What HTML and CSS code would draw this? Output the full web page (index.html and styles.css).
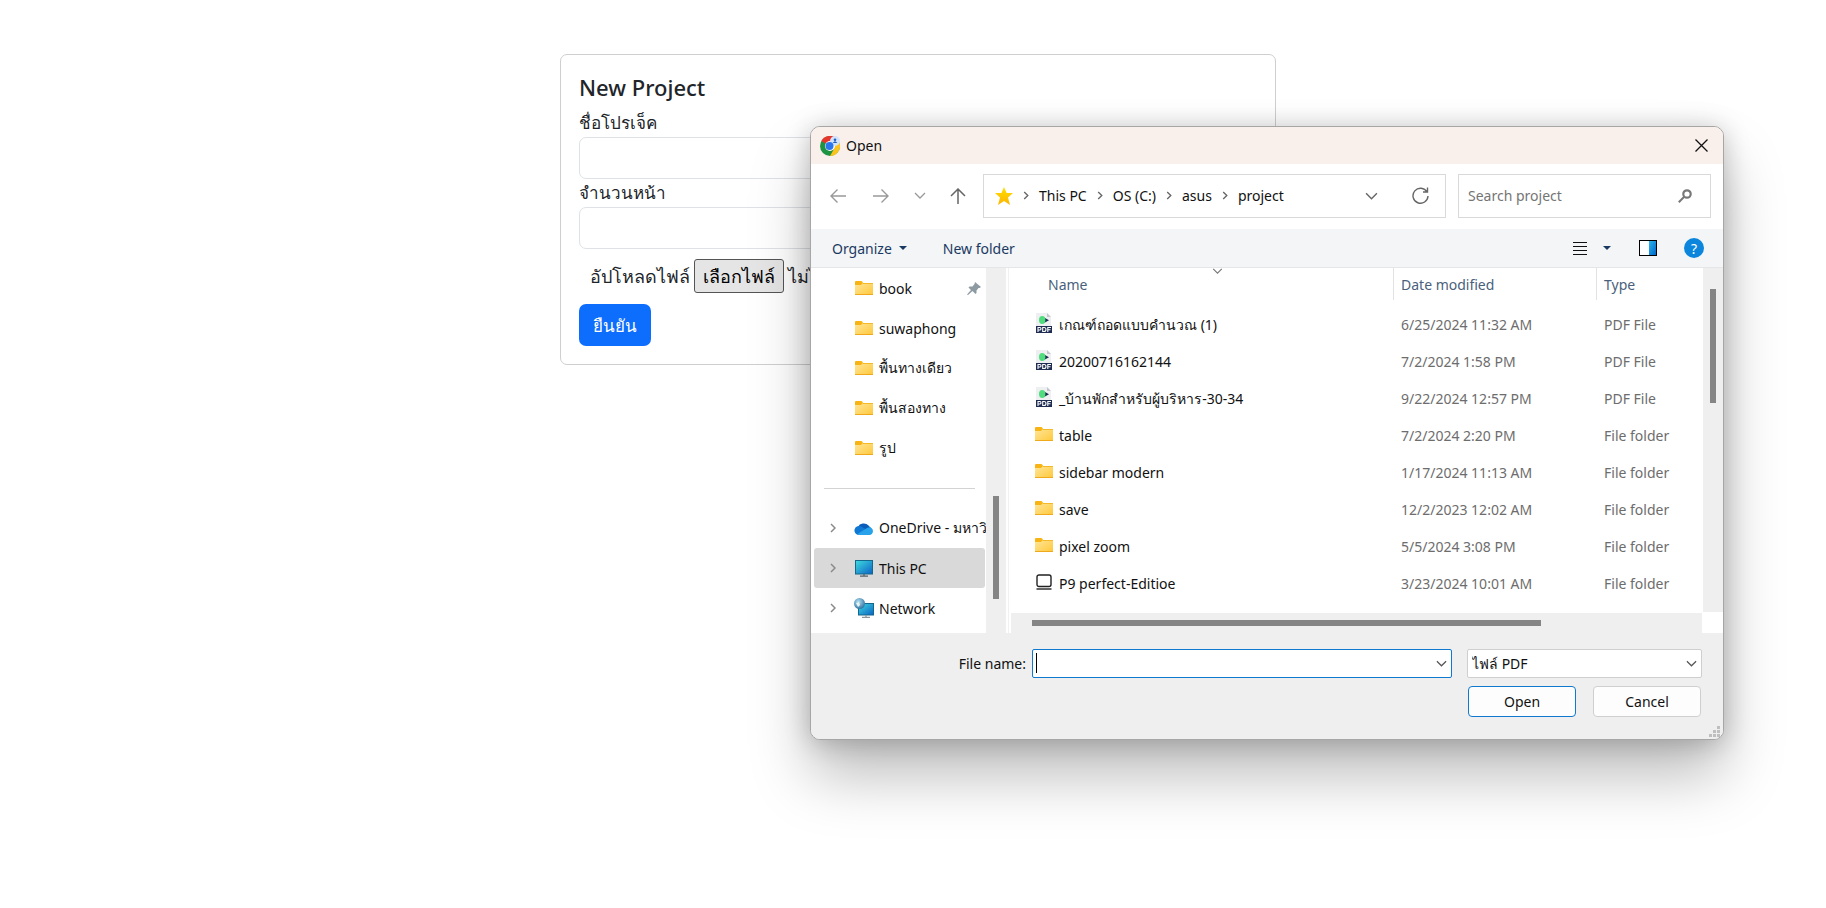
FILE: index.html
```html
<!DOCTYPE html>
<html lang="th">
<head>
<meta charset="utf-8">
<title>New Project</title>
<link rel="stylesheet" href="styles.css">
</head>
<body>
<svg class="defs" aria-hidden="true">
  <defs>
    <linearGradient id="gFolder" x1="0" y1="0" x2="1" y2="1"><stop offset="0" stop-color="#ffe69a"/><stop offset="1" stop-color="#ffc83a"/></linearGradient>
    <linearGradient id="gStar" x1="0" y1="0" x2="0" y2="1"><stop offset="0" stop-color="#ffe000"/><stop offset="1" stop-color="#fdb400"/></linearGradient>
    <linearGradient id="gScreen" x1="0" y1="0" x2="1" y2="1"><stop offset="0" stop-color="#3fdce0"/><stop offset="1" stop-color="#0b62c4"/></linearGradient>
    <linearGradient id="gPane" x1="0" y1="0" x2="1" y2="1"><stop offset="0" stop-color="#2db4ee"/><stop offset="1" stop-color="#0067c8"/></linearGradient>
    <radialGradient id="gGlobe" cx=".4" cy=".35" r=".7"><stop offset="0" stop-color="#b5e0f2"/><stop offset="1" stop-color="#2a6f9e"/></radialGradient>
    <symbol id="folder" viewBox="0 0 18 14"><path d="M0 1Q0 0 1 0H6Q7 0 7.500 1L8 2V5H0Z" fill="#f8b414"/><path d="M0 4H6L8 2H18V14H0Z" fill="url(#gFolder)"/><path d="M8 2.500H18" stroke="#f4b92a"/><path d="M0 13.500H18" stroke="#eeaa1c"/></symbol>
    <symbol id="pdf" viewBox="0 0 16 20"><path d="M0 0H11L15 4V14H0Z" fill="#eeeff1"/><path d="M11 0L15 4H11Z" fill="#c3c6ca"/><path d="M8 4.500L13 7.200L8 10Z" fill="#1c2a50"/><ellipse cx="6.200" cy="7" rx="3.200" ry="4" fill="#4fdc7c"/><rect y="13" width="16" height="7" fill="#1e2c52"/><path d="M2 19V14.500H4Q5 14.500 5 15.700T4 17H2M6.700 14.500V18.500H8Q10 18.500 10 16.500T8 14.500ZM11.800 19V14.500H15M11.800 16.800H14.500" fill="none" stroke="#fff" stroke-width="1.100"/></symbol>
    <symbol id="laptop" viewBox="0 0 16 16"><rect x="1" y="1" width="14" height="11.500" rx="2" fill="none" stroke="#222" stroke-width="1.400"/><path d="M.5 15H15.500" stroke="#222" stroke-width="1.400"/></symbol>
    <symbol id="right" viewBox="0 0 6 10"><path d="M1 1L5 5L1 9" fill="none" stroke="currentColor" stroke-width="1.500"/></symbol>
    <symbol id="down" viewBox="0 0 12 7"><path d="M1 1L6 6L11 1" fill="none" stroke="currentColor" stroke-width="1.300"/></symbol>
    <symbol id="caret" viewBox="0 0 8 4"><path d="M0 0H8L4 4Z" fill="#1b3a63"/></symbol>
  </defs>
</svg>

<main class="page">
  <form class="card">
    <h1 class="card-title">New Project</h1>
    <label class="field-label" for="pname">ชื่อโปรเจ็ค</label>
    <input class="field" id="pname" type="text">
    <label class="field-label" for="pages">จำนวนหน้า</label>
    <input class="field" id="pages" type="text">
    <div class="upload">
      <label for="pick">อัปโหลดไฟล์</label>
      <button class="pick" id="pick" type="button">เลือกไฟล์</button>
      <span>ไม่ได้เลือกไฟล์ใด</span>
    </div>
    <button class="submit" type="submit">ยืนยัน</button>
  </form>
</main>

<section class="dialog" role="dialog" aria-label="Open">
  <header class="titlebar">
    <svg width="20" height="20" viewBox="0 0 20 20"><circle cx="10" cy="10" r="10" fill="#1e9443"/><path d="M10 10L1.300 5A10 10 0 0 1 18.700 5Z" fill="#e6352b"/><path d="M10 5H18.700A10 10 0 0 1 10 20L14.300 12.500Z" fill="#fcc31c"/><circle cx="10" cy="10" r="5" fill="#fff"/><circle cx="15" cy="5" r="5" fill="#d3e3fb"/><circle cx="9.500" cy="10" r="4" fill="#2b76ec"/><circle cx="15" cy="3.800" r="1.300" fill="#1f5fc4"/><path d="M12.700 7Q15 3.500 17.300 7Z" fill="#1f5fc4"/></svg>
    <span>Open</span>
    <button class="icon-btn close" aria-label="Close"><svg width="13" height="13" viewBox="0 0 13 13"><path d="M.5.5L12.500 12.500M12.500.5L.5 12.500" stroke="#111" stroke-width="1.300"/></svg></button>
  </header>

  <nav class="navbar">
    <div class="arrows">
      <button class="icon-btn dim back" aria-label="Back"><svg width="16" height="14" viewBox="0 0 16 14" fill="none" stroke="currentColor" stroke-width="1.400"><path d="M16 7H1M7.500.5L1 7L7.500 13.500"/></svg></button>
      <button class="icon-btn dim" aria-label="Forward"><svg width="16" height="14" viewBox="0 0 16 14" fill="none" stroke="currentColor" stroke-width="1.400"><path d="M0 7H15M8.500.5L15 7L8.500 13.500"/></svg></button>
      <button class="icon-btn dim" aria-label="Recent locations"><svg width="12" height="7"><use href="#down"/></svg></button>
      <button class="icon-btn" aria-label="Up"><svg width="16" height="16" viewBox="0 0 16 16" fill="none" stroke="currentColor" stroke-width="1.500"><path d="M8 16V1M1 8L8 1L15 8"/></svg></button>
    </div>
    <div class="address">
      <svg width="18" height="18" viewBox="0 0 18 18"><path d="M9 0L11.600 6H18L13 10.500L15 18L9 14L3 18L5 10.500L0 6H6.400Z" fill="url(#gStar)"/></svg>
      <svg width="6" height="9"><use href="#right"/></svg><a href="#">This PC</a>
      <svg width="6" height="9"><use href="#right"/></svg><a href="#">OS (C:)</a>
      <svg width="6" height="9"><use href="#right"/></svg><a href="#">asus</a>
      <svg width="6" height="9"><use href="#right"/></svg><a href="#">project</a>
      <button class="icon-btn history" aria-label="Previous locations"><svg width="13" height="8"><use href="#down"/></svg></button>
      <button class="icon-btn" aria-label="Refresh"><svg width="17" height="17" viewBox="0 0 17 17" fill="none" stroke="currentColor" stroke-width="1.400"><path d="M15 5A7.500 7.500 0 1 0 16 9M15.500.5V5H11"/></svg></button>
    </div>
    <div class="search">
      <input type="search" placeholder="Search project" aria-label="Search project">
      <svg width="14" height="14" viewBox="0 0 14 14" fill="none" stroke="#777"><circle cx="9" cy="5" r="3.700" stroke-width="2.200"/><path d="M6.200 7.800L.8 13.200" stroke-width="2"/></svg>
    </div>
  </nav>

  <div class="toolbar">
    <button class="tool">Organize <svg width="8" height="4"><use href="#caret"/></svg></button>
    <button class="tool">New folder</button>
    <button class="tool view" aria-label="View"><svg width="14" height="13" viewBox="0 0 14 13"><path d="M0 .5H14M0 4.500H14M0 8.500H14M0 12.500H14" stroke="#111"/></svg></button>
    <button class="tool" aria-label="More views"><svg width="8" height="4"><use href="#caret"/></svg></button>
    <button class="tool pane" aria-label="Preview pane"><svg width="18" height="16" viewBox="0 0 18 16"><rect x=".5" y=".5" width="17" height="15" fill="#fff" stroke="#000"/><rect x="10" y="1" width="7" height="14" fill="url(#gPane)"/></svg></button>
    <button class="tool help" aria-label="Help">?</button>
  </div>

  <div class="content">
    <aside class="tree">
      <ul>
        <li><i></i><svg width="18" height="14"><use href="#folder"/></svg><span>book</span><svg class="pin" width="14" height="13" viewBox="0 0 14 13"><path d="M8 0L14 5L12.500 6L11.500 6L9.500 8.500L9.500 11L8.500 12L5.500 9L1 13L0 12.500L4 8L1.500 5.500L2.500 4.500L5.500 4.500L7.500 2Z" fill="#8e9aa2"/></svg></li>
        <li><i></i><svg width="18" height="14"><use href="#folder"/></svg><span>suwaphong</span></li>
        <li><i></i><svg width="18" height="14"><use href="#folder"/></svg><span>พื้นทางเดียว</span></li>
        <li><i></i><svg width="18" height="14"><use href="#folder"/></svg><span>พื้นสองทาง</span></li>
        <li><i></i><svg width="18" height="14"><use href="#folder"/></svg><span>รูป</span></li>
      </ul>
      <hr>
      <ul>
        <li><i><svg width="6" height="10"><use href="#right"/></svg></i><svg class="wide" width="20" height="13" viewBox="0 0 20 13"><path d="M4 5A6 5 0 0 1 14.500 3.500L17 6L10 9L3 8Z" fill="#0a5cb8"/><path d="M5 13A4.500 4.500 0 1 1 7.500 4.800L15 9L12 13Z" fill="#0f78d4"/><path d="M3 12.200L13 6Q15.500 4.500 17.500 6A4 4 0 0 1 16 13H5Q4 13 3 12.200Z" fill="#28a2ea"/></svg><span>OneDrive - มหาวิทยาลัย</span></li>
        <li class="selected"><i><svg width="6" height="10"><use href="#right"/></svg></i><svg width="18" height="17" viewBox="0 0 18 17"><rect x=".5" y=".5" width="17" height="13.500" fill="url(#gScreen)" stroke="#14688c"/><path d="M9 14V16M5 16.200H13" stroke="#54626c" stroke-width="1.300"/></svg><span>This PC</span></li>
        <li><i><svg width="6" height="10"><use href="#right"/></svg></i><svg class="wide" width="20" height="20" viewBox="0 0 20 20"><rect x="4.500" y="5.500" width="15" height="11.500" fill="url(#gScreen)" stroke="#14688c"/><path d="M12 17V19M8 19.400H16" stroke="#8b979e" stroke-width="1.300"/><circle cx="5.500" cy="5.500" r="5.500" fill="url(#gGlobe)"/><path d="M2 5L5 4L6 7L4 9Z" fill="#e8f4f4"/></svg><span>Network</span></li>
      </ul>
    </aside>
    <div class="vscroll tree-scroll"><b></b></div>
    <div class="list">
      <div class="list-view">
        <table>
          <thead><tr><th class="c-name">Name<svg class="sort" width="11" height="6"><use href="#down"/></svg></th><th class="c-date">Date modified</th><th class="c-type">Type</th></tr></thead>
          <tbody>
            <tr><td><div class="file"><svg width="18" height="20"><use href="#pdf"/></svg>เกณฑ์ถอดแบบคำนวณ (1)</div></td><td>6/25/2024 11:32 AM</td><td>PDF File</td></tr>
            <tr><td><div class="file"><svg width="18" height="20"><use href="#pdf"/></svg>20200716162144</div></td><td>7/2/2024 1:58 PM</td><td>PDF File</td></tr>
            <tr><td><div class="file"><svg width="18" height="20"><use href="#pdf"/></svg>_บ้านพักสำหรับผู้บริหาร-30-34</div></td><td>9/22/2024 12:57 PM</td><td>PDF File</td></tr>
            <tr><td><div class="file"><svg width="18" height="14"><use href="#folder"/></svg>table</div></td><td>7/2/2024 2:20 PM</td><td>File folder</td></tr>
            <tr><td><div class="file"><svg width="18" height="14"><use href="#folder"/></svg>sidebar modern</div></td><td>1/17/2024 11:13 AM</td><td>File folder</td></tr>
            <tr><td><div class="file"><svg width="18" height="14"><use href="#folder"/></svg>save</div></td><td>12/2/2023 12:02 AM</td><td>File folder</td></tr>
            <tr><td><div class="file"><svg width="18" height="14"><use href="#folder"/></svg>pixel zoom</div></td><td>5/5/2024 3:08 PM</td><td>File folder</td></tr>
            <tr><td><div class="file"><svg width="18" height="16"><use href="#laptop"/></svg>P9 perfect-Editioe</div></td><td>3/23/2024 10:01 AM</td><td>File folder</td></tr>
          </tbody>
        </table>
        <div class="hscroll"><b></b></div>
      </div>
      <div class="vscroll list-scroll"><b></b></div>
    </div>
  </div>

  <footer class="footer">
    <label for="fname">File name:</label>
    <div class="combo fname"><input id="fname" type="text"><span class="cursor"></span><svg width="11" height="7"><use href="#down"/></svg></div>
    <div class="combo ftype"><select aria-label="File type"><option>ไฟล์ PDF</option></select><svg width="11" height="7"><use href="#down"/></svg></div>
    <div class="actions"><button class="btn primary">Open</button><button class="btn">Cancel</button></div>
    <svg class="grip" width="12" height="12" viewBox="0 0 12 12" fill="#bfbfbf"><path d="M9 0h3v3H9zM5 4h3v3H5zM9 4h3v3H9zM1 8h3v3H1zM5 8h3v3H5zM9 8h3v3H9z"/></svg>
  </footer>
</section>
</body>
</html>
```
FILE: styles.css
```css
* { box-sizing: border-box; }
body {
  margin: 0;
  background: #fff;
  color: #212529;
  font-family: "Noto Sans", "Open Sans", sans-serif;
  font-size: 14px;
  overflow: hidden;
}
button, input, select { font: inherit; color: inherit; margin: 0; }
svg { display: block; flex: none; }
.defs { position: absolute; width: 0; height: 0; }

/* Project form */
.page { padding: 54px 0 54px 10px; font-size: 17px; }
.card {
  width: 716px;
  max-width: 100%;
  margin: 0 auto;
  display: flex;
  flex-direction: column;
  border: 1px solid #cfcfcf;
  border-radius: 7px;
  padding: 19px 18px 18px;
}
.card-title { margin: 0 0 8px; font-size: 22px; font-weight: 500; line-height: 27px; }
.field-label { line-height: 28px; }
.field { height: 42px; border: 1px solid #dee2e6; border-radius: 7px; padding: 6px 12px; }
.upload { display: flex; align-items: center; gap: 4px; padding: 10px 11px 11px; font-size: 18px; line-height: 27px; white-space: nowrap; }
.pick { height: 34px; padding: 0 8px; border: 1px solid #555; border-radius: 3px; background: #e5e5e5; color: #000; }
.submit { align-self: flex-start; height: 42px; padding: 0 14px; border: 0; border-radius: 7px; background: #0d6efd; color: #fff; }

/* File dialog window */
.dialog {
  position: absolute;
  left: 810px;
  right: 102px;
  top: 126px;
  border: 1px solid #a6a6a6;
  border-radius: 10px;
  background: #fff;
  color: #111;
  box-shadow: 0 36px 60px rgba(0, 0, 0, .26), 0 2px 26px rgba(0, 0, 0, .22);
}
.icon-btn { padding: 0; border: 0; background: none; color: #666; }
.icon-btn.dim { color: #999; }
.titlebar {
  display: flex;
  align-items: center;
  gap: 6px;
  height: 37px;
  padding: 0 15px 0 9px;
  border-radius: 9px 9px 0 0;
  background: #f9f0eb;
}
.close { margin-left: auto; }

.navbar { display: flex; align-items: center; height: 65px; padding: 0 12px 2px 19px; }
.arrows { display: flex; align-items: center; justify-content: space-between; width: 136px; margin-right: 17px; }
.back { margin-right: 3px; }
.address {
  display: flex;
  flex: 1;
  align-items: center;
  gap: 10px;
  height: 44px;
  margin-right: 12px;
  padding: 0 16px 0 11px;
  border: 1px solid #d9d9d9;
  color: #666;
}
.address a { color: #111; text-decoration: none; }
.history { margin-left: auto; margin-right: 24px; }
.search { display: flex; align-items: center; width: 253px; height: 44px; padding: 0 18px 0 9px; border: 1px solid #d9d9d9; }
.search input { flex: 1; min-width: 0; padding: 0; border: 0; outline: 0; background: none; }
.search input::placeholder { color: #757575; opacity: 1; }

.toolbar {
  display: flex;
  align-items: center;
  height: 39px;
  padding: 0 19px 0 21px;
  background: #f3f5f7;
  border-bottom: 1px solid #e4e6e8;
}
.tool { display: flex; align-items: center; gap: 7px; margin-right: 36px; padding: 0; border: 0; background: none; color: #1b3a63; }
.tool.view { margin-left: auto; margin-right: 16px; }
.tool.pane { margin-left: -8px; margin-right: 27px; }
.tool.help { justify-content: center; width: 20px; height: 20px; margin: 0; border-radius: 50%; background: #0c86dc; color: #fff; }

.content { display: flex; height: 365px; }
.tree { width: 175px; overflow: hidden; }
.tree ul { margin: 0; padding: 0 1px 0 3px; list-style: none; }
.tree li { display: flex; align-items: center; height: 40px; padding-left: 16px; white-space: nowrap; border-radius: 3px; }
.tree li span { margin-left: 6px; }
.tree i { flex: none; width: 25px; color: #8a8a8a; }
.tree .wide { margin: 0 -1px; }
.tree .selected { background: #d9d9d9; }
.tree .pin { margin-left: auto; margin-right: 4px; }
.tree hr { height: 1px; margin: 20px 11px 19px 13px; border: 0; background: #d3d3d3; }
.vscroll { width: 20px; padding: 0 7px; background: #efefef; }
.vscroll b, .hscroll b { display: block; background: #858585; }
.tree-scroll { padding-top: 228px; }
.tree-scroll b { height: 103px; }
.list { display: flex; flex: 1; margin-left: 2px; border-left: 1px solid #f1f1f1; }
.list-view { display: flex; flex: 1; flex-direction: column; min-width: 0; }
.list-scroll { height: 344px; padding-top: 21px; }
.list-scroll b { height: 114px; }
.hscroll { height: 20px; margin: auto 1px 0 2px; padding: 7px 161px 7px 21px; background: #efefef; }
.hscroll b { height: 6px; }

table { width: 100%; table-layout: fixed; border-collapse: separate; border-spacing: 0; }
th { position: relative; height: 32px; padding: 0 0 0 7px; font-weight: 400; text-align: left; color: #4a5f7c; }
.c-name { padding-left: 39px; }
.c-date { width: 203px; border-left: 1px solid #e2e2e2; }
.c-type { width: 107px; border-left: 1px solid #e2e2e2; }
.sort { position: absolute; top: 0; left: 203px; color: #777; }
tbody::before { content: ""; display: block; height: 6px; }
td { height: 37px; padding: 0 0 0 8px; color: #6d6d6d; white-space: nowrap; }
td:first-child { padding-left: 26px; color: #111; }
.file { display: flex; align-items: center; gap: 6px; height: 24px; }
.file svg { margin-bottom: 4px; }

.footer {
  position: relative;
  display: grid;
  grid-template-columns: 1fr 420px 235px;
  align-items: center;
  align-content: start;
  gap: 8px 15px;
  height: 106px;
  padding: 16px 21px 20px;
  border-radius: 0 0 9px 9px;
  background: #efefef;
}
.footer label { margin-right: -9px; text-align: right; }
.combo { position: relative; display: flex; }
.combo input, .combo select { width: 100%; height: 29px; padding: 0 4px; border: 1px solid #cfcfcf; border-radius: 2px; outline: 0; background: #fff; appearance: none; }
.combo input { border-color: #0f78cf; }
.combo svg { position: absolute; right: 5px; top: 11px; color: #555; pointer-events: none; }
.cursor { position: absolute; left: 4px; top: 4px; width: 1px; height: 20px; background: #000; }
.actions { grid-column: 3; display: flex; justify-content: space-between; padding: 0 1px; }
.btn { width: 108px; height: 31px; padding: 0; border: 1px solid #cfcfcf; border-radius: 4px; background: #fdfdfd; }
.btn.primary { border-color: #0f78cf; }
.grip { position: absolute; right: 3px; bottom: 1px; }
```
